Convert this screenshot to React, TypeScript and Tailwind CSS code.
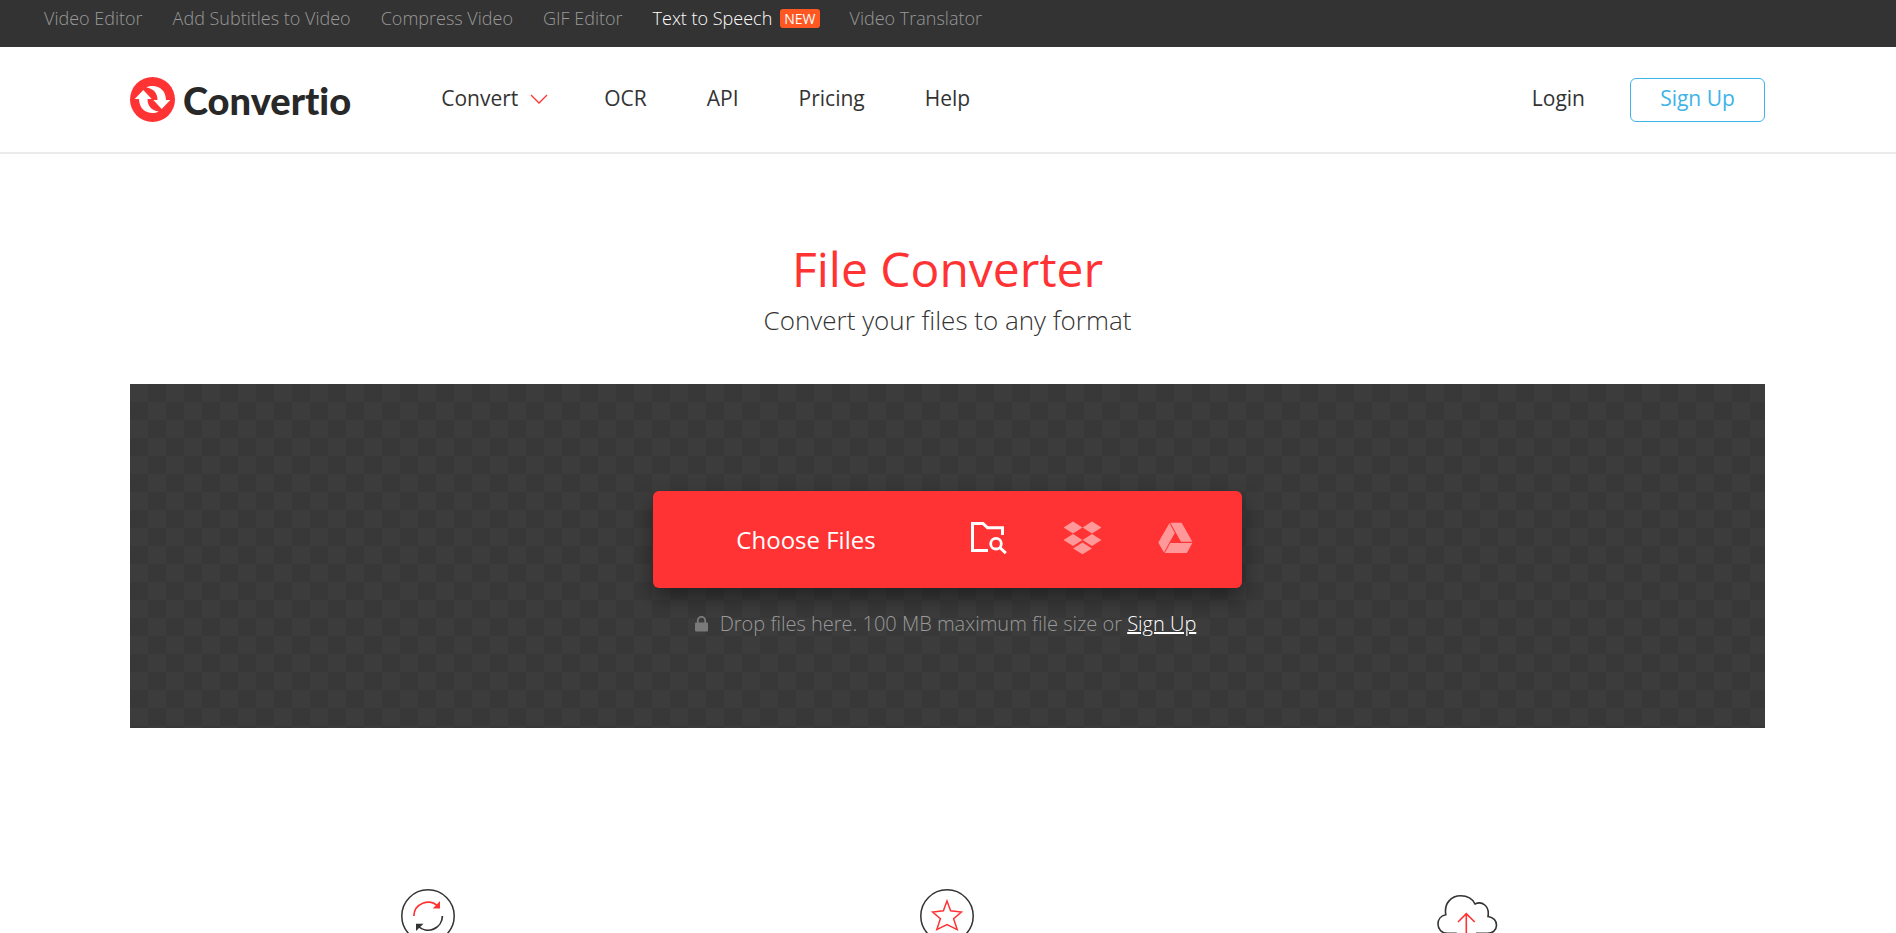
import type { ReactNode } from "react";

const topLinks = [
  { label: "Video Editor" },
  { label: "Add Subtitles to Video" },
  { label: "Compress Video" },
  { label: "GIF Editor" },
  { label: "Text to Speech", isNew: true },
  { label: "Video Translator" },
];

const navLinks = ["OCR", "API", "Pricing", "Help"];

function LogoMark() {
  const arrow =
    "M13.3 13 L21.7 22 H17.5 C17.5 29 21.5 33.5 28.7 34.5 C26.5 35.7 25 36 22.5 36 C15 36 9.2 31 9 22 H4.7 Z";
  return (
    <svg width="45" height="45" viewBox="0 0 45 45" aria-hidden="true">
      <circle cx="22.5" cy="22.5" r="22.5" fill="#ff3333" />
      <path d={arrow} fill="#fff" />
      <path d={arrow} fill="#fff" transform="rotate(180 22.5 22.5)" />
    </svg>
  );
}

function FolderSearchIcon() {
  return (
    <svg width="37" height="34" viewBox="0 0 37 34" fill="none" stroke="#fff" strokeWidth="3" aria-hidden="true">
      <path d="M17 29.5 H1.5 V2.5 H12 L16.5 6.8 H31.5 V14" />
      <circle cx="25" cy="22.7" r="5.3" strokeWidth="2.8" />
      <path d="M28.8 26.5 L34.8 32.2" />
    </svg>
  );
}

function DropboxIcon() {
  return (
    <svg width="39" height="34" viewBox="0 0 39 34" fill="#fff" fillOpacity="0.5" aria-hidden="true">
      <path d="M10 .6 L19.4 6.5 L10 12.4 L.6 6.5 Z" />
      <path d="M29 .6 L38.4 6.5 L29 12.4 L19.6 6.5 Z" />
      <path d="M10 13.1 L19.4 19 L10 24.9 L.6 19 Z" />
      <path d="M29 13.1 L38.4 19 L29 24.9 L19.6 19 Z" />
      <path d="M19.5 21.6 L28.9 27.4 L19.5 33.2 L10.1 27.4 Z" />
    </svg>
  );
}

function DriveIcon() {
  return (
    <svg width="35" height="32" viewBox="0 0 35 32" fill="#fff" fillOpacity="0.5" aria-hidden="true">
      <path d="M11.4 1.3 L16.8 11 L5.9 30.4 L.3 20.6 Z" />
      <path d="M12.3 .8 H23.6 L34.4 19.8 H23 Z" />
      <path d="M12.3 20.9 H34.4 L28.8 31 H6.7 Z" />
    </svg>
  );
}

function ConvertFeatureIcon() {
  return (
    <svg width="54" height="54" viewBox="0 0 54 54" fill="none" aria-hidden="true">
      <circle cx="27" cy="27" r="26.2" stroke="#333" strokeWidth="1.5" />
      <path d="M12.8 27 A14.3 14.3 0 0 1 37 17.2" stroke="#ff3333" strokeWidth="1.7" />
      <path d="M39 12 V19.5 H31.8 Z" fill="#ff3333" />
      <path d="M41.4 27 A14.3 14.3 0 0 1 17 37" stroke="#333" strokeWidth="1.7" />
      <path d="M15 42 V34.7 H22.5 Z" fill="#333" />
    </svg>
  );
}

function StarFeatureIcon() {
  return (
    <svg width="54" height="54" viewBox="0 0 54 54" fill="none" aria-hidden="true">
      <circle cx="27" cy="27" r="26.2" stroke="#333" strokeWidth="1.5" />
      <path
        d="M27 12 L30.6 21.7 L41.4 23 L33.6 29.8 L37.2 40.6 L27 35.5 L16.8 40.6 L20.4 29.8 L12.6 23 L23.4 21.7 Z"
        stroke="#ff3333"
        strokeWidth="1.5"
      />
    </svg>
  );
}

function CloudFeatureIcon() {
  return (
    <svg width="61" height="54" viewBox="0 0 61 54" fill="none" strokeWidth="1.6" aria-hidden="true">
      <path
        d="M19.7 44.3 H10.5 C4.5 44.3 1 39.8 1 35 C1 30.5 4 26.6 8.8 25.7 C6.8 14 14.5 6.8 23.7 6.8 C30 6.8 35.5 9.8 38 15 C45 11.5 52.8 17 51 27.5 C56.5 28.5 59.5 32 59.5 36.3 C59.5 41 55.5 44.3 50.5 44.3 H39"
        stroke="#333"
      />
      <path d="M29.3 54 V25 M21 33 L29.3 24.7 L37.7 33" stroke="#ff3333" />
    </svg>
  );
}

function SourceButton({ label, children }: { label: string; children: ReactNode }) {
  return (
    <button type="button" aria-label={label} className="flex h-full w-[93px] cursor-pointer items-center justify-center pb-1">
      {children}
    </button>
  );
}

export default function App() {
  return (
    <div className="h-screen overflow-hidden bg-white font-['Open_Sans','Noto_Sans',sans-serif] text-[#333]">
      {/* Product links */}
      <div className="h-[47px] bg-[#333] px-11">
        <ul className="flex h-9 items-center gap-[30px] text-lg font-light text-[#999]">
          {topLinks.map((link) => (
            <li key={link.label}>
              <a href="#" className={link.isNew ? "flex items-center gap-2 text-white" : "hover:text-white"}>
                {link.label}
                {link.isNew && (
                  <span className="rounded-[3px] bg-[#ff5722] px-1 text-sm leading-[19px] font-normal">NEW</span>
                )}
              </a>
            </li>
          ))}
        </ul>
      </div>

      {/* Header */}
      <header className="border-b-2 border-[#ebebeb]">
        <div className="mr-[131px] ml-[130px] flex h-[105px] items-center">
          <a href="#" className="flex items-center gap-2">
            <LogoMark />
            <span className="font-['Lato',sans-serif] text-[38px] leading-[44px] font-black text-[#282828] [font-variant-ligatures:none]">
              Convertio
            </span>
          </a>
          <nav className="ml-[90px] flex items-center gap-[60px] pb-0.5 text-[21px]">
            <button type="button" className="-mr-1 flex cursor-pointer items-center gap-3">
              Convert
              <svg width="18" height="10" viewBox="0 0 18 10" fill="none" stroke="#ff3333" strokeWidth="1.3" aria-hidden="true">
                <path d="M1 1 L9 9 L17 1" />
              </svg>
            </button>
            {navLinks.map((label) => (
              <a key={label} href="#">
                {label}
              </a>
            ))}
          </nav>
          <div className="ml-auto flex items-center gap-[45px] text-[21px]">
            <a href="#" className="pb-0.5">
              Login
            </a>
            <a
              href="#"
              className="flex h-11 w-[135px] items-center justify-center rounded-md border border-[#3cb4e7] pb-0.5 text-[#3cb4e7]"
            >
              Sign Up
            </a>
          </div>
        </div>
      </header>

      <main className="mr-[131px] ml-[130px]">
        <div className="pt-[85px] pb-11 text-center">
          <h1 className="text-5xl leading-[60px] text-[#ff3333]">File Converter</h1>
          <p className="pt-px text-[26px] leading-[40px] font-light">Convert your files to any format</p>
        </div>

        {/* Drop zone */}
        <section className="flex h-[344px] flex-col items-center bg-[repeating-conic-gradient(#383838_0_25%,#3c3c3c_0_50%)] bg-[length:36px_36px] pt-[107px]">
          <div className="flex h-[97px] w-[589px] items-center rounded-md bg-[#ff3333] pr-5 shadow-[0_10px_20px_rgba(0,0,0,0.4)]">
            <button type="button" className="h-full flex-1 cursor-pointer pl-4 text-2xl text-white">
              Choose Files
            </button>
            <SourceButton label="From computer">
              <FolderSearchIcon />
            </SourceButton>
            <SourceButton label="From Dropbox">
              <DropboxIcon />
            </SourceButton>
            <SourceButton label="From Google Drive">
              <DriveIcon />
            </SourceButton>
          </div>
          <p className="mt-5 flex items-center gap-3 pr-1 text-xl leading-8 font-light text-[#999]">
            <svg width="13" height="16" viewBox="0 0 13 16" fill="none" aria-hidden="true">
              <path d="M2.8 7 V4.5 A3.7 3.7 0 0 1 10.2 4.5 V7" stroke="#7a7a7a" strokeWidth="1.8" />
              <rect y="6.5" width="13" height="9" rx="1" fill="#7a7a7a" />
            </svg>
            <span>
              Drop files here. 100 MB maximum file size or{" "}
              <a href="#" className="text-white underline">
                Sign Up
              </a>
            </span>
          </p>
        </section>

        {/* Features */}
        <section className="grid grid-cols-3 justify-items-center px-[38px] pt-[161px]">
          <ConvertFeatureIcon />
          <StarFeatureIcon />
          <CloudFeatureIcon />
        </section>
      </main>
    </div>
  );
}
